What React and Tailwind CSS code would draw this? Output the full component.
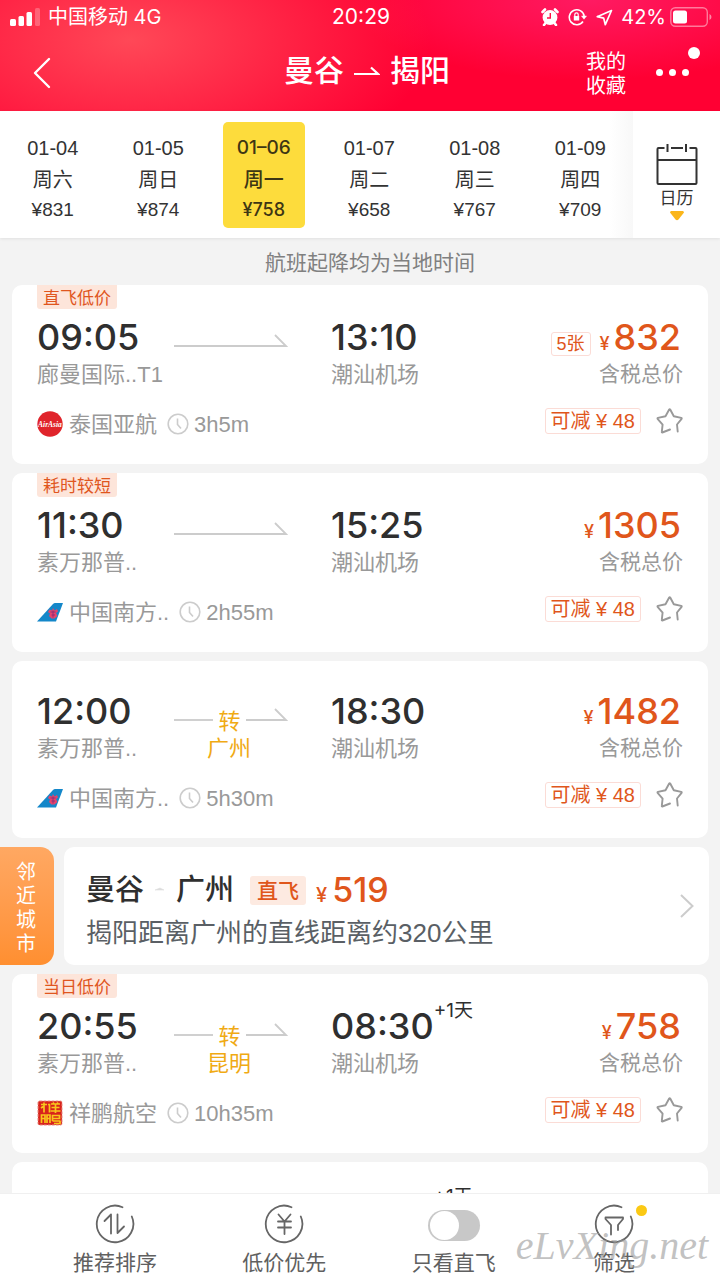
import React, { useState } from 'react';

const DATES = [
  { date: '01-04', day: '周六', price: '¥831' },
  { date: '01-05', day: '周日', price: '¥874' },
  { date: '01–06', day: '周一', price: '¥758' },
  { date: '01-07', day: '周二', price: '¥658' },
  { date: '01-08', day: '周三', price: '¥767' },
  { date: '01-09', day: '周四', price: '¥709' },
];

const FLIGHTS = [
  { id: 1, tag: '直飞低价', dep: '09:05', from: '廊曼国际..T1', arr: '13:10', to: '潮汕机场', airline: '泰国亚航', logo: 'airasia', duration: '3h5m', price: '832', left: '5张' },
  { id: 2, tag: '耗时较短', dep: '11:30', from: '素万那普..', arr: '15:25', to: '潮汕机场', airline: '中国南方..', logo: 'southern', duration: '2h55m', price: '1305' },
  { id: 3, dep: '12:00', from: '素万那普..', via: '广州', arr: '18:30', to: '潮汕机场', airline: '中国南方..', logo: 'southern', duration: '5h30m', price: '1482' },
];

const MORE_FLIGHTS = [
  { id: 4, tag: '当日低价', dep: '20:55', from: '素万那普..', via: '昆明', arr: '08:30', plus: '+1天', to: '潮汕机场', airline: '祥鹏航空', logo: 'lucky', duration: '10h35m', price: '758' },
  { id: 5, dep: '20:55', from: '素万那普..', via: '昆明', arr: '08:50', plus: '+1天', to: '潮汕机场', airline: '祥鹏航空', logo: 'lucky', duration: '10h55m', price: '758' },
];

const StatusBar = () => (
  <div className="grid grid-cols-[1fr_auto_1fr] items-center h-[34px] pl-[10px] pr-2 font-['Inter','Noto_Sans_CJK_SC',sans-serif] text-[20px] leading-[34px]">
    <div className="flex items-center gap-2">
      <svg width="30" height="18" viewBox="0 0 30 18" fill="#fff">
        <rect x="0" y="11" width="6" height="7" rx="1.5" />
        <rect x="8.5" y="8" width="5.5" height="10" rx="1.5" />
        <rect x="16.5" y="4" width="5.5" height="14" rx="1.5" />
        <rect x="25" y="0" width="5" height="18" rx="1.5" opacity="0.25" />
      </svg>
      <span>中国移动 4G</span>
    </div>
    <span className="text-[21px]">20:29</span>
    <div className="flex items-center justify-end">
      <svg width="18" height="18" viewBox="0 0 18 18" className="mr-[9px]">
        <circle cx="9" cy="9.5" r="7.4" fill="#fff" />
        <path d="M1.5 4 4 1.5M16.5 4 14 1.5M3 17l2-2.5M15 17l-2-2.5" stroke="#fff" strokeWidth="2.6" strokeLinecap="round" />
        <path d="M9.3 5v5H6" fill="none" stroke="#ff1048" strokeWidth="1.4" />
      </svg>
      <svg width="19" height="18" viewBox="0 0 19 18" fill="none" stroke="#fff" strokeWidth="1.6" className="mr-[9px]">
        <path d="M15 13.5A7.5 7.5 0 1 1 16.2 8" />
        <path d="M13.5 8h5l-2.5 3.2z" fill="#fff" strokeWidth="0.5" />
        <rect x="5.8" y="8" width="5.4" height="4.5" fill="#fff" stroke="none" />
        <path d="M6.8 8V6.5a1.7 1.7 0 0 1 3.4 0V8" strokeWidth="1.2" />
      </svg>
      <svg width="17" height="17" viewBox="0 0 17 17" fill="none" stroke="#fff" strokeWidth="1.7" strokeLinejoin="round" className="mr-2">
        <path d="M15.5 1.5 1.2 7.7l6.500 1.4 1.6 6.6z" />
      </svg>
      <span>42%</span>
      <svg width="42" height="20" viewBox="0 0 42 20" className="ml-1">
        <rect x="0.8" y="0.8" width="36.5" height="18.4" rx="4.5" fill="none" stroke="#fff" strokeOpacity="0.45" strokeWidth="1.4" />
        <rect x="3" y="3.5" width="14" height="13" rx="2.5" fill="#fff" />
        <path d="M39.5 7v6q2-1 2-3t-2-3z" fill="#fff" opacity="0.5" />
      </svg>
    </div>
  </div>
);

const Header = () => (
  <header className="shrink-0 text-white bg-[radial-gradient(ellipse_300px_150px_at_130px_40px,#ff4857,transparent),radial-gradient(ellipse_240px_80px_at_590px_0px,#ff1a62,transparent)] bg-[#ff0033]">
    <StatusBar />
    <div className="grid grid-cols-[1fr_auto_1fr] items-center h-[77px] pl-8 pr-[18px]">
      <button aria-label="返回" className="w-5">
        <svg width="20" height="32" viewBox="0 0 20 32" fill="none" stroke="#fff" strokeWidth="2.4" strokeLinecap="round" strokeLinejoin="round">
          <path d="M17 2 3 16l14 14" />
        </svg>
      </button>
      <h1 className="flex items-center gap-[10px] pb-1 text-[30px] leading-9 font-medium">
        <span>曼谷</span>
        <svg width="26" height="14" viewBox="0 0 26 14" fill="none" stroke="#fff" strokeWidth="2.2">
          <path d="M0 10h24L17 3.500" />
        </svg>
        <span>揭阳</span>
      </h1>
      <div className="flex items-center justify-end gap-7">
        <button className="w-11 pt-0.5 text-[20px] leading-6">我的收藏</button>
        <button aria-label="更多" className="relative w-[46px] h-8 flex items-center gap-[6px]">
          <i className="w-[7px] h-[7px] rounded-full bg-white" />
          <i className="w-[7px] h-[7px] rounded-full bg-white" />
          <i className="w-[7px] h-[7px] rounded-full bg-white" />
          <i className="absolute right-0.5 -top-[10px] w-3 h-3 rounded-full bg-white" />
        </button>
      </div>
    </div>
  </header>
);

const DateStrip = ({ selected, onSelect }) => (
  <nav className="relative z-10 shrink-0 flex h-[127px] bg-white shadow-[0_1px_3px_rgba(0,0,0,0.08)]">
    <div className="relative flex-1 flex items-center">
      {DATES.map((d, i) => (
        <div key={d.date} className="flex-1 flex justify-center">
          <button
            onClick={() => onSelect(i)}
            className={`w-[82px] h-[106px] pt-[10px] rounded-[5px] flex flex-col items-center ${i === selected ? "bg-[#fddc3c] text-[#3d3614] font-medium font-['Inter','Noto_Sans_CJK_SC',sans-serif]" : 'text-[#333]'}`}
          >
            <span className={`leading-8 ${i === selected ? 'text-[19px]' : 'text-[20px]'}`}>{d.date}</span>
            <span className="text-[20px] leading-8">{d.day}</span>
            <span className={`leading-7 ${i === selected ? 'text-[18px]' : 'text-[19px]'}`}>{d.price}</span>
          </button>
        </div>
      ))}
      <div className="absolute right-0 top-0 h-full w-6 bg-gradient-to-r from-transparent to-[#f8f8f8]" />
    </div>
    <button className="w-[87px] pt-8 flex flex-col items-center justify-start text-[#333]">
      <svg width="42" height="42" viewBox="0 0 42 42" fill="none" stroke="#333" strokeWidth="2">
        <path d="M8.500 5H2.500q-1 0-1 1v34q0 1 1 1h37q1 0 1-1V6q0-1-1-1h-6M15 5h12M1.500 17h39M11.500 1v8M30 1v8" />
      </svg>
      <span className="pt-0.5 text-[17px] leading-6">日历</span>
      <svg width="14" height="10" viewBox="0 0 14 10">
        <path d="M1 0h12q1 0.5 1 1.5L8.500 8.500q-1.500 1.500-3 0L0 1.500Q0 0.500 1 0z" fill="#fbb61a" />
      </svg>
    </button>
  </nav>
);

const AirlineLogo = ({ name }) => {
  if (name === 'airasia') {
    return (
      <svg width="26" height="26" viewBox="0 0 26 26">
        <circle cx="13" cy="13" r="12.7" fill="#e0242b" />
        <text x="13" y="16" textAnchor="middle" fontSize="7.5" fontStyle="italic" fontWeight="700" fill="#fff" fontFamily="Liberation Serif, serif">AirAsia</text>
      </svg>
    );
  }
  if (name === 'southern') {
    return (
      <svg width="26" height="26" viewBox="0 0 26 26">
        <path d="M0 22.500 16 5q1-1 2-1h8l-7 18.500z" fill="#1487c9" />
        <path d="M16 9l1.500 2.500L20 10l1 2.500-2 1.500 1.500 3-3 2.500h-3L12 17l1-2.500-2-1.500 1.500-2.500 2.500 1z" fill="#e5436b" />
        <path d="M13.500 13h5M14.500 16h3.500M16 11.500v7" stroke="#7d2b7c" strokeWidth="0.8" />
      </svg>
    );
  }
  return (
    <svg width="26" height="26" viewBox="0 0 26 26">
      <rect x="1" y="1" width="24" height="24" rx="1.5" fill="#d8231c" stroke="#e88d80" strokeWidth="1" strokeDasharray="3 1" />
      <g fill="none" stroke="#f8c51c" strokeWidth="1.7">
        <path d="M4 4.500h6M7 2.500v10M4 8l3-2M11 4.500h1.500v8" />
        <path d="M14 4h9M14.500 7.500h8M13.500 11h10M18.500 4v9M16 2.500l1 1.500M21 2.500l-1 1.500" />
        <path d="M4.500 23v-8h3.500v8M4.500 18.500H8M10 23v-8h3v8M10 18.500h3" />
        <path d="M15.500 15.500h7v3h-7zM15.500 21h8M15.500 15v6M23 21v2.500h-6" />
      </g>
    </svg>
  );
};

const Arrow = ({ width }) => (
  <svg width={width} height="24" viewBox={`0 0 ${width} 24`} fill="none" stroke="#ccc" strokeWidth="1.8">
    <path d={`M0 12h${width - 2}l-11-11`} />
  </svg>
);

const Route = ({ via }) => (
  <div className="w-[114px]">
    <div className="flex items-center justify-between h-10 pt-[18px] text-[22px] leading-[22px] text-[#f0aa14]">
      {via ? (
        <>
          <i className="w-[39px] h-0.5 bg-[#d0d0d0]" />
          <span className="pt-1">转</span>
          <Arrow width={42} />
        </>
      ) : (
        <Arrow width={114} />
      )}
    </div>
    {via && <p className="pl-[33px] pt-px text-[22px] leading-[34px] text-[#f0aa14]">{via}</p>}
  </div>
);

const FlightCard = ({ flight }) => {
  const [starred, setStarred] = useState(false);

  return (
    <article className={`shrink-0 mx-3 px-[25px] pb-[23px] rounded-[10px] bg-white ${flight.tag ? '' : 'pt-[30px]'}`}>
      {flight.tag && (
        <span className="block w-20 h-6 mb-2 rounded-b-[3px] bg-[#fde5da] text-center text-[17px] leading-[27px] text-[#e0561e]">{flight.tag}</span>
      )}
      <div className="grid grid-cols-[137px_157px_1fr_auto]">
        <div className="whitespace-nowrap">
          <p className="font-['Inter',sans-serif] text-[36px] leading-10 font-medium text-[#2f2f2f]">{flight.dep}</p>
          <p className="pt-px text-[22px] leading-[34px] text-[#999]">{flight.from}</p>
        </div>
        <Route via={flight.via} />
        <div>
          <div className="flex items-start h-10 font-['Inter','Noto_Sans_CJK_SC',sans-serif] text-[#2f2f2f]">
            <span className="text-[36px] leading-10 font-medium">{flight.arr}</span>
            {flight.plus && <sup className="top-0 text-[19px] leading-[10px]">{flight.plus}</sup>}
          </div>
          <p className="pt-px text-[22px] leading-[34px] text-[#999]">{flight.to}</p>
        </div>
        <div className="text-right">
          <div className="flex items-baseline justify-end h-10 pr-0.5 text-[#e0561b]">
            {flight.left && (
              <span className="mr-[9px] px-[5px] border border-[#fbdcd6] rounded-[3px] text-[18px] leading-[22px]">{flight.left}</span>
            )}
            <span className="mr-1 font-['Inter',sans-serif] text-[18px] font-medium">¥</span>
            <span className="font-['Inter',sans-serif] text-[36px] leading-10 font-medium">{flight.price}</span>
          </div>
          <p className="pt-px text-[21px] leading-8 text-[#999]">含税总价</p>
        </div>
      </div>
      <div className="mt-[15px] flex items-start justify-between">
        <div className="flex items-center h-[34px] text-[22px] text-[#999]">
          <AirlineLogo name={flight.logo} />
          <span className="ml-[6px] mr-[10px]">{flight.airline}</span>
          <svg width="22" height="22" viewBox="0 0 22 22" fill="none" stroke="#ccc" strokeWidth="1.6">
            <circle cx="11" cy="11" r="9.8" />
            <path d="M10.500 5.500v6l3.500 4" />
          </svg>
          <span className="ml-[5px]">{flight.duration}</span>
        </div>
        <div className="flex items-center">
          <span className="h-[26px] px-[5px] border border-[#fbdcd6] rounded-[3px] text-[20px] leading-6 text-[#e0561b]">可减 ¥ 48</span>
          <button aria-label="收藏" aria-pressed={starred} onClick={() => setStarred(!starred)} className="ml-[14px]">
            <svg width="28" height="28" viewBox="0 0 28 28" fill={starred ? '#fddc3c' : 'none'} stroke="#999" strokeWidth="1.9" strokeLinecap="round" strokeLinejoin="round">
              <path d="M15 22.500 7.300 25.500q-0.600 0-0.500-0.600L7.600 17.600 2.600 11.800q-0.400-0.700 0.400-0.900L10.500 9.300 14.200 2.500q0.500-0.800 1 0L18.800 9.300 26.200 10.900q0.800 0.200 0.400 0.900L22 17.500 22.700 24.500" />
            </svg>
          </button>
        </div>
      </div>
    </article>
  );
};

const NearbyCity = () => (
  <section className="shrink-0 flex gap-[10px] pr-[11px]">
    <div className="w-[54px] pr-0.5 pt-1 flex items-center justify-center rounded-r-[14px] bg-gradient-to-b from-[#ffa862] to-[#ff8f30] text-white">
      <span className="w-5 text-[20px] leading-6">邻近城市</span>
    </div>
    <a href="#nearby" className="flex-1 flex items-center justify-between pl-[22px] pr-[14px] rounded-[10px] bg-white">
      <div className="pt-[23px] pb-3">
        <div className="flex items-center h-10">
          <span className="text-[29px] leading-10 font-medium text-[#2f2f2f]">曼谷</span>
          <svg width="32" height="8" viewBox="0 0 32 8"><path d="M11 4h9L16 2z" fill="#ddd" stroke="#ddd" strokeWidth="0.6" /></svg>
          <span className="text-[29px] leading-10 font-medium text-[#2f2f2f]">广州</span>
          <span className="ml-4 px-[7px] rounded-[3px] bg-[#fdeae1] text-[21px] leading-[29px] font-medium text-[#e0561b]">直飞</span>
          <span className="ml-[10px] h-10 flex items-baseline font-['Inter',sans-serif] font-medium text-[#e0561b]">
            <span className="mr-[5px] text-[20px]">¥</span>
            <span className="text-[34px] leading-10">519</span>
          </span>
        </div>
        <p className="mt-[3px] text-[26px] leading-10 text-[#5a5f65]">揭阳距离广州的直线距离约320公里</p>
      </div>
      <svg width="16" height="26" viewBox="0 0 16 26" fill="none" stroke="#ccc" strokeWidth="2">
        <path d="M2 2l11.500 11L2 24" />
      </svg>
    </a>
  </section>
);

const RingIcon = ({ children }) => (
  <svg width="40" height="40" viewBox="0 0 40 40" fill="none" stroke="#666" strokeWidth="1.8" strokeLinecap="round" strokeLinejoin="round">
    <path d="M27.500 3.200A18.300 18.300 0 1 0 36.800 12.500" />
    {children}
  </svg>
);

const Footer = () => (
  <footer className="relative shrink-0 flex justify-between h-[87px] px-[73px] pt-[10px] border-t border-[#f0f0f0] bg-white text-[21px] leading-7 text-[#606060]">
    <button className="flex flex-col items-center gap-[5px]">
      <RingIcon><path d="M9.500 17l6.500-6.500V29.500M22.500 10.500v18.500l6.500-6.500" /></RingIcon>
      推荐排序
    </button>
    <button className="flex flex-col items-center gap-[5px]">
      <RingIcon><path d="M14.500 10.500l6 7 6-7M20.500 17.500V30M14 17.500h13M14 23.500h13" /></RingIcon>
      低价优先
    </button>
    <label className="flex flex-col items-center gap-[5px]">
      <span className="h-10 pt-0.5 flex items-center">
        <input
          type="checkbox"
          role="switch"
          className="relative appearance-none w-[52px] h-[31px] rounded-full bg-[#c8c8c8] checked:bg-[#fddc3c] before:content-[''] before:absolute before:left-0.5 before:top-px before:w-[29px] before:h-[29px] before:rounded-full before:bg-white checked:before:left-[21px]"
        />
      </span>
      只看直飞
    </label>
    <button className="relative w-[66px] flex flex-col items-center gap-[5px]">
      <RingIcon><path d="M17 30.500V21L11.500 15v-1.500h17.500V15L24 21V26" /></RingIcon>
      筛选
      <i className="absolute right-0 top-px w-[11px] h-[11px] rounded-full bg-[#fbc914]" />
    </button>
    <span className="absolute right-3 bottom-[14px] pointer-events-none font-['Liberation_Serif',serif] italic text-[40px] leading-10 text-[#999]/60">eLvXing.net</span>
  </footer>
);

const App = () => {
  const [selected, setSelected] = useState(2);

  return (
    <div className="h-screen flex flex-col overflow-hidden bg-[#f3f3f3] font-['Liberation_Sans','Noto_Sans_CJK_SC',sans-serif]">
      <Header />
      <DateStrip selected={selected} onSelect={setSelected} />
      <main className="flex-1 min-h-0 overflow-y-auto [scrollbar-width:none] flex flex-col gap-[9px]">
        <p className="shrink-0 h-[38px] pt-[5px] pl-5 text-center text-[21px] leading-10 text-[#808080]">航班起降均为当地时间</p>
        {FLIGHTS.map(f => <FlightCard key={f.id} flight={f} />)}
        <NearbyCity />
        {MORE_FLIGHTS.map(f => <FlightCard key={f.id} flight={f} />)}
      </main>
      <Footer />
    </div>
  );
};

export default App;
